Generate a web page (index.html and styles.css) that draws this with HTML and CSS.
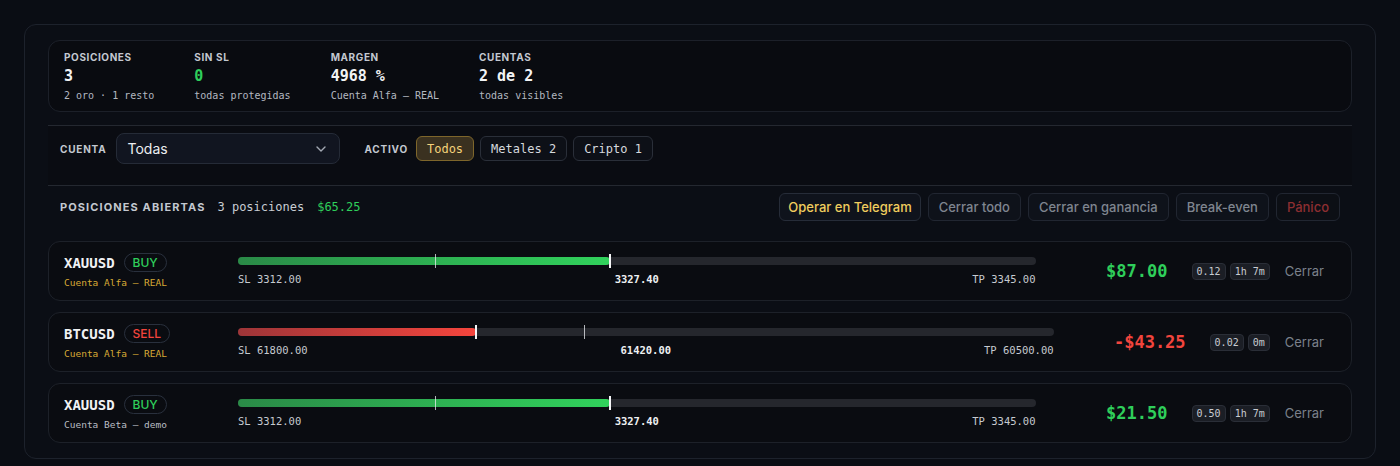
FILE: index.html
```html
<!DOCTYPE html>
<html lang="es">
<head>
  <meta charset="UTF-8">
  <title>Posiciones abiertas</title>
  <link rel="stylesheet" href="styles.css">
</head>
<body>
  <div class="panel">
    <div class="stats">
      <div class="stat">
        <div class="stat-label">Posiciones</div>
        <div class="stat-value">3</div>
        <div class="stat-sub">2 oro · 1 resto</div>
      </div>
      <div class="stat">
        <div class="stat-label">Sin SL</div>
        <div class="stat-value green">0</div>
        <div class="stat-sub">todas protegidas</div>
      </div>
      <div class="stat">
        <div class="stat-label">Margen</div>
        <div class="stat-value">4968 %</div>
        <div class="stat-sub">Cuenta Alfa — REAL</div>
      </div>
      <div class="stat">
        <div class="stat-label">Cuentas</div>
        <div class="stat-value">2 de 2</div>
        <div class="stat-sub">todas visibles</div>
      </div>
    </div>

    <div class="filters">
      <span class="section-label">Cuenta</span>
      <div class="select">
        <span>Todas</span>
        <svg width="10" height="6" viewBox="0 0 10 6"><path d="M1 1l4 4 4-4" fill="none" stroke="#a3a9b3" stroke-width="1.4" stroke-linecap="round" stroke-linejoin="round"/></svg>
      </div>
      <span class="section-label activo">Activo</span>
      <div class="chips">
        <button class="chip active">Todos</button>
        <button class="chip">Metales 2</button>
        <button class="chip">Cripto 1</button>
      </div>
    </div>

    <div class="positions-head">
      <span class="section-label big">Posiciones abiertas</span>
      <span class="count">3 posiciones</span>
      <span class="total green">$65.25</span>
      <div class="actions">
        <button class="action telegram">Operar en Telegram</button>
        <button class="action">Cerrar todo</button>
        <button class="action">Cerrar en ganancia</button>
        <button class="action">Break-even</button>
        <button class="action panic">Pánico</button>
      </div>
    </div>

    <div class="positions">
      <div class="position">
        <div class="pos-info">
          <div class="pos-title"><span class="symbol">XAUUSD</span><span class="side buy">BUY</span></div>
          <div class="pos-account real">Cuenta Alfa — REAL</div>
        </div>
        <div class="range">
          <div class="track">
            <div class="fill buy" style="width: 46.6%"></div>
            <div class="tick" style="left: 24.7%"></div>
            <div class="marker" style="left: 46.6%"></div>
          </div>
          <div class="range-labels"><span>SL 3312.00</span><span class="now">3327.40</span><span>TP 3345.00</span></div>
        </div>
        <div class="pnl green">$87.00</div>
        <div class="meta"><span class="tag">0.12</span><span class="tag">1h 7m</span></div>
        <button class="close">Cerrar</button>
      </div>

      <div class="position">
        <div class="pos-info">
          <div class="pos-title"><span class="symbol">BTCUSD</span><span class="side sell">SELL</span></div>
          <div class="pos-account real">Cuenta Alfa — REAL</div>
        </div>
        <div class="range">
          <div class="track">
            <div class="fill sell" style="width: 29.2%"></div>
            <div class="tick" style="left: 42.4%"></div>
            <div class="marker" style="left: 29.2%"></div>
          </div>
          <div class="range-labels"><span>SL 61800.00</span><span class="now">61420.00</span><span>TP 60500.00</span></div>
        </div>
        <div class="pnl red">-$43.25</div>
        <div class="meta"><span class="tag">0.02</span><span class="tag">0m</span></div>
        <button class="close">Cerrar</button>
      </div>

      <div class="position">
        <div class="pos-info">
          <div class="pos-title"><span class="symbol">XAUUSD</span><span class="side buy">BUY</span></div>
          <div class="pos-account">Cuenta Beta — demo</div>
        </div>
        <div class="range">
          <div class="track">
            <div class="fill buy" style="width: 46.6%"></div>
            <div class="tick" style="left: 24.7%"></div>
            <div class="marker" style="left: 46.6%"></div>
          </div>
          <div class="range-labels"><span>SL 3312.00</span><span class="now">3327.40</span><span>TP 3345.00</span></div>
        </div>
        <div class="pnl green">$21.50</div>
        <div class="meta"><span class="tag">0.50</span><span class="tag">1h 7m</span></div>
        <button class="close">Cerrar</button>
      </div>
    </div>
  </div>
</body>
</html>
```

FILE: styles.css
```css
body {
  margin: 0;
  padding: 24px;
  background: #0a0d14;
  color: #e8eaee;
  font-family: Inter, "Noto Sans", sans-serif;
}
button {
  font: inherit;
  cursor: pointer;
}
.panel {
  background: #0b0e15;
  border: 1px solid #1d222c;
  border-radius: 12px;
  padding: 15px 23px;
}
.green { color: #2fcf5b; }
.red { color: #f2453d; }

/* resumen */
.stats {
  display: flex;
  gap: 40px;
  background: #090b10;
  border: 1px solid #1c2029;
  border-radius: 12px;
  padding: 10px 15px 8px;
  margin-bottom: 13px;
}
.stat-label {
  font-size: 10px;
  line-height: 12px;
  font-weight: 700;
  letter-spacing: 0.06em;
  text-transform: uppercase;
  color: #c3c8d0;
}
.stat-value {
  margin-top: 4px;
  font-family: "DejaVu Sans Mono", monospace;
  font-size: 15px;
  line-height: 18px;
  font-weight: 700;
  color: #f2f3f5;
}
.stat-value.green { color: #2fcf5b; }
.stat-sub {
  margin-top: 4px;
  font-family: "DejaVu Sans Mono", monospace;
  font-size: 10px;
  line-height: 14px;
  color: #b3b8c0;
}

.section-label {
  font-size: 10px;
  font-weight: 700;
  letter-spacing: 0.08em;
  text-transform: uppercase;
  color: #c3c8d0;
}
.section-label.big {
  font-size: 11px;
  letter-spacing: 0.1em;
}

/* filtros */
.filters {
  display: flex;
  align-items: center;
  background: #0a0c12;
  border-top: 1px solid #242830;
  padding: 7px 12px 21px;
}
.select {
  display: flex;
  align-items: center;
  justify-content: space-between;
  width: 224px;
  height: 31px;
  box-sizing: border-box;
  margin-left: 10px;
  padding: 0 13px 0 10px;
  background: #111520;
  border: 1px solid #252b37;
  border-radius: 8px;
  font-size: 14px;
  color: #eceef1;
}
.activo {
  margin-left: 24px;
}
.chips {
  display: flex;
  gap: 6px;
  margin-left: 8px;
}
.chip {
  height: 25px;
  padding: 0 10px;
  background: #0d1017;
  border: 1px solid #2a2f39;
  border-radius: 6px;
  font-family: "DejaVu Sans Mono", monospace;
  font-size: 12px;
  color: #d6d9de;
}
.chip.active {
  background: #3a3120;
  border-color: #7e662b;
  color: #f4d27a;
}

/* cabecera posiciones */
.positions-head {
  display: flex;
  align-items: center;
  border-top: 1px solid #242830;
  padding: 7px 12px 20px;
}
.count {
  margin-left: 12px;
  font-family: "DejaVu Sans Mono", monospace;
  font-size: 12px;
  color: #c9cdd3;
}
.total {
  margin-left: 13px;
  font-family: "DejaVu Sans Mono", monospace;
  font-size: 12px;
}
.actions {
  display: flex;
  gap: 7px;
  margin-left: auto;
}
.action {
  height: 28px;
  padding: 0 10px;
  background: #0e121a;
  border: 1px solid #212631;
  border-radius: 6px;
  font-size: 13px;
  font-weight: 500;
  color: #7f858f;
}
.action.telegram {
  padding: 0 8px;
  color: #f0cd5e;
  border-color: #262c38;
  background: #0f131c;
}
.action.panic {
  color: #8c2e31;
  background: #0c0f15;
}

/* tarjetas */
.positions {
  display: flex;
  flex-direction: column;
  gap: 11px;
}
.position {
  display: flex;
  align-items: center;
  height: 60px;
  box-sizing: border-box;
  padding: 0 21px 0 15px;
  background: #0a0c11;
  border: 1px solid #1d2129;
  border-radius: 12px;
}
.pos-info {
  width: 150px;
  flex-shrink: 0;
  margin-right: 24px;
}
.pos-title {
  display: flex;
  align-items: center;
  gap: 9px;
}
.symbol {
  font-family: "DejaVu Sans Mono", monospace;
  font-size: 14px;
  font-weight: 700;
  color: #f1f2f4;
}
.side {
  height: 19px;
  box-sizing: border-box;
  display: inline-flex;
  align-items: center;
  padding: 0 8px;
  border: 1px solid #29303d;
  border-radius: 10px;
  font-size: 12px;
  font-weight: 500;
}
.side.buy { color: #2fcf5b; }
.side.sell { color: #f2453d; }
.pos-account {
  margin-top: 4px;
  font-family: "DejaVu Sans Mono", monospace;
  font-size: 9.5px;
  line-height: 13px;
  color: #b9bdc4;
}
.pos-account.real { color: #d8aa35; }

.range {
  flex: 1;
}
.track {
  position: relative;
  height: 8px;
  background: #25272d;
  border-radius: 4px;
}
.fill {
  height: 100%;
  border-radius: 4px;
}
.fill.buy { background: linear-gradient(90deg, #2a8a47, #31d25c); }
.fill.sell { background: linear-gradient(90deg, #9e3538, #f4453d); }
.tick {
  position: absolute;
  top: -3px;
  width: 1px;
  height: 14px;
  background: rgba(235, 238, 242, 0.75);
}
.marker {
  position: absolute;
  top: -3px;
  width: 2px;
  height: 14px;
  margin-left: -1px;
  background: #f4f5f7;
}
.range-labels {
  display: flex;
  justify-content: space-between;
  margin-top: 8px;
  font-family: "DejaVu Sans Mono", monospace;
  font-size: 10.5px;
  line-height: 13px;
  color: #c6cad0;
}
.range-labels .now {
  font-weight: 700;
  color: #eef0f2;
}

.pnl {
  min-width: 108px;
  margin-left: 24px;
  text-align: right;
  font-family: "DejaVu Sans Mono", monospace;
  font-size: 17px;
  font-weight: 700;
}
.meta {
  display: flex;
  gap: 4px;
  margin-left: 24px;
}
.tag {
  height: 17px;
  line-height: 15px;
  box-sizing: border-box;
  padding: 0 4px;
  background: #1b1e25;
  border: 1px solid #2a2e37;
  border-radius: 4px;
  font-family: "DejaVu Sans Mono", monospace;
  font-size: 10px;
  color: #c9ccd2;
}
.close {
  margin-left: 9px;
  padding: 0 6px;
  background: none;
  border: none;
  font-size: 13px;
  color: #7b818b;
}
```
